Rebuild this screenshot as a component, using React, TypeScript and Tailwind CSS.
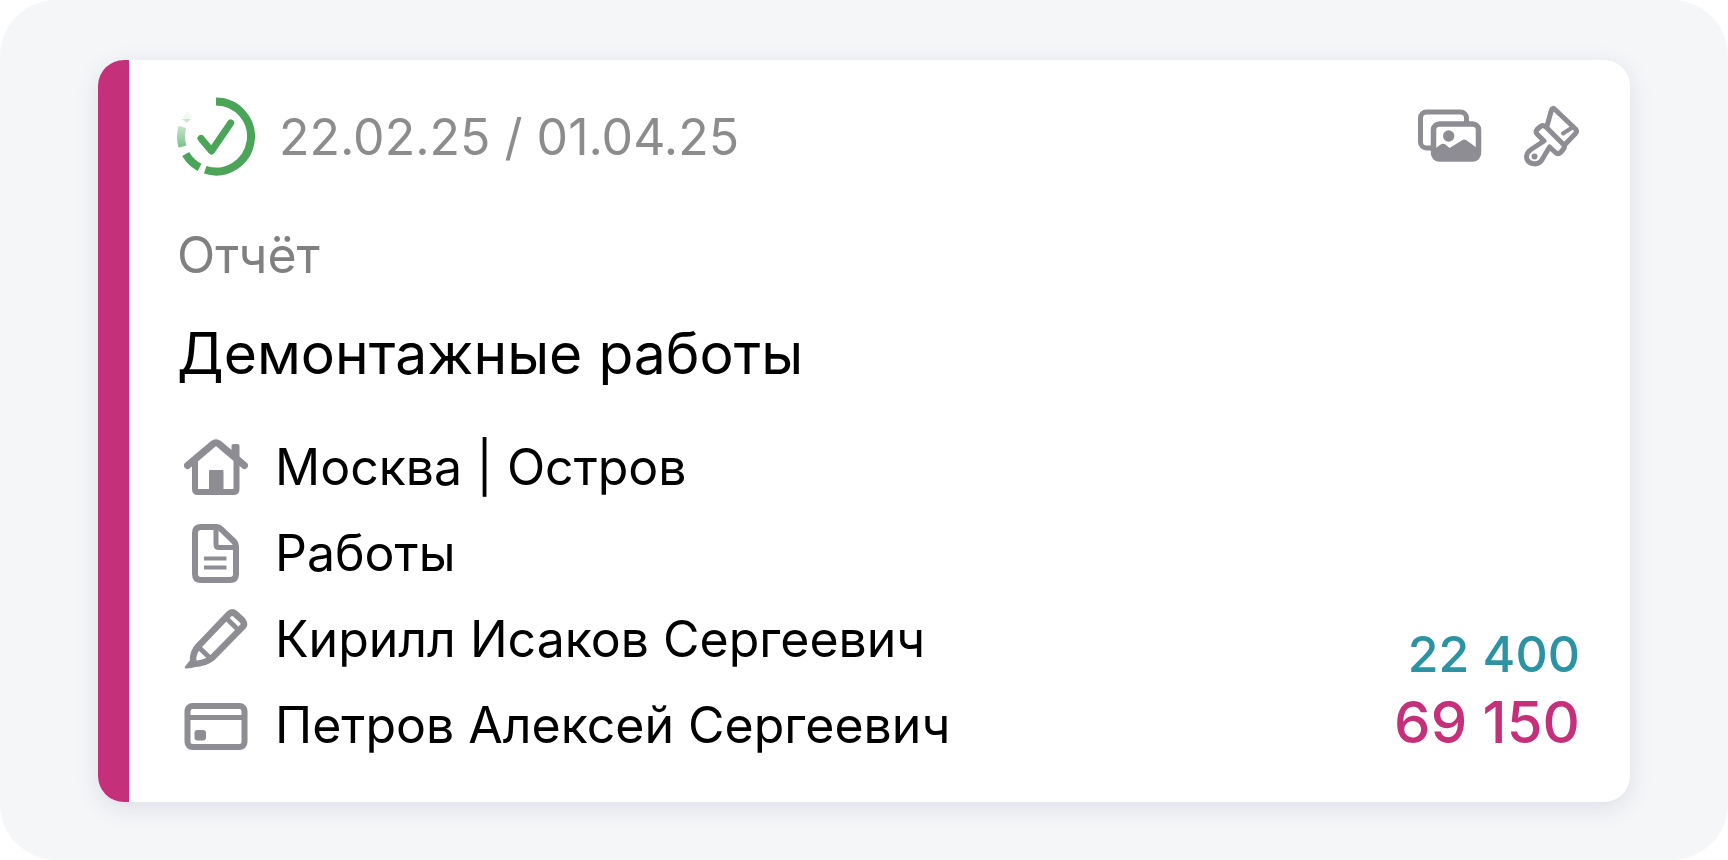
import React from 'react';

export default function App() {
  return (
    <main className="bg-white font-[Inter,sans-serif] text-black">
      <div className="min-h-screen rounded-[56px] bg-[#f5f6f8] px-[98px] pt-[60px] pb-[58px]">
        <article className="flex overflow-hidden rounded-[26px] bg-white shadow-[0_6px_24px_rgba(30,30,80,0.10)]">
          <div className="w-[31px] shrink-0 bg-[#c4307a]" />
          <div className="min-w-0 flex-1 pt-[37px] pr-[50px] pb-[34px] pl-12">
            <header className="flex h-20 items-center justify-between">
              <div className="flex items-center gap-6">
                <StatusIcon />
                <span className="text-[50px] leading-[60px] text-[#8c8c8c]">22.02.25 / 01.04.25</span>
              </div>
              <div className="flex items-center gap-10">
                <button type="button" aria-label="Фото">
                  <GalleryIcon />
                </button>
                <button type="button" aria-label="Оформление">
                  <BrushIcon />
                </button>
              </div>
            </header>

            <p className="mt-12 text-[50px] leading-[60px] text-[#808080]">Отчёт</p>
            <h1 className="mt-[34px] text-[57px] leading-[70px]">Демонтажные работы</h1>

            <div className="mt-[35px] flex items-end justify-between">
              <ul>
                <InfoRow icon={<HouseIcon />} text="Москва | Остров" />
                <InfoRow icon={<DocumentIcon />} text="Работы" />
                <InfoRow icon={<PencilIcon />} text="Кирилл Исаков Сергеевич" />
                <InfoRow icon={<CardIcon />} text="Петров Алексей Сергеевич" />
              </ul>
              <div className="pb-3 text-right font-medium">
                <p className="text-[50px] leading-[68px] text-[#2b93a3]">22 400</p>
                <p className="text-[58px] leading-[68px] text-[#c4307a]">69 150</p>
              </div>
            </div>
          </div>
        </article>
      </div>
    </main>
  );
}

interface InfoRowProps {
  icon: React.ReactNode;
  text: string;
}

function InfoRow({ icon, text }: InfoRowProps) {
  return (
    <li className="flex h-[86px] items-center gap-5">
      <span className="flex w-[78px] justify-center">{icon}</span>
      <span className="text-[50px] leading-[60px]">{text}</span>
    </li>
  );
}

function StatusIcon() {
  return (
    <svg className="h-20 w-[78px]" viewBox="0 0 78 80" fill="none" stroke="#4aa559" strokeWidth="8">
      <defs>
        <linearGradient id="fade" gradientUnits="userSpaceOnUse" x1="0" y1="52" x2="0" y2="16">
          <stop offset="0" stopColor="#4aa559" stopOpacity="0.75" />
          <stop offset="1" stopColor="#4aa559" stopOpacity="0.05" />
        </linearGradient>
      </defs>
      <path d="M39 4.5A35 35 0 1 1 28.2 72.8" />
      <path d="M22.6 70.4A35 35 0 0 1 8.7 57" />
      <path d="M5.5 49.7A35 35 0 0 1 5.4 29.9" stroke="url(#fade)" />
      <path d="M4.5 22H13.5L10 26Z" fill="#4aa559" fillOpacity="0.25" stroke="none" />
      <path d="M8 22L12.5 17" stroke="#4aa559" strokeOpacity="0.08" strokeWidth="6" />
      <path d="M24 41.5L34.5 54L53.7 26" strokeWidth="7" strokeLinecap="round" strokeLinejoin="round" />
    </svg>
  );
}

function GalleryIcon() {
  return (
    <svg className="h-16 w-16" viewBox="0 0 64 64" fill="none" stroke="#8e8d94" strokeWidth="5">
      <rect x="2.5" y="7" width="46" height="36" rx="6" />
      <rect x="15.5" y="19" width="45" height="35" rx="6" fill="#fff" strokeWidth="5.5" />
      <circle cx="30.7" cy="31" r="5.7" fill="#8e8d94" stroke="none" />
      <path d="M15 45L22 40Q25.3 37.5 28 40L31.5 43L43 36Q46.3 33 49.5 36L61 44.5V51Q61 56 56 56H20Q15 56 15 51Z" fill="#8e8d94" stroke="none" />
    </svg>
  );
}

function BrushIcon() {
  return (
    <svg className="h-16 w-[58px]" viewBox="0 0 58 64" fill="none" stroke="#8e8d94" strokeWidth="5" strokeLinecap="round" strokeLinejoin="round">
      <path d="M25 21L29.5 5Q30.5 2 33 4.5L53.5 24Q55.500 26 53.5 28.5L42.5 40" />
      <path d="M51 22L41 28.5" strokeWidth="4" />
      <path d="M24.5 22.5L41 39Q43.5 41.5 41.5 44L38.5 47.5Q36 50 33.5 47.5L27.5 42L19.5 55.5Q16 60 10.5 58.5Q4.5 57 4.5 51.5Q5 47 9 44.5L22 36L15.5 29.5Q13 27 15 24.5L18.5 21.5Q21.5 19.5 24.5 22.5Z" />
      <circle cx="12.5" cy="51.5" r="3" fill="#8e8d94" stroke="none" />
    </svg>
  );
}

function HouseIcon() {
  return (
    <svg className="h-16 w-16" viewBox="0 0 64 64" fill="none" stroke="#8e8d94" strokeWidth="6">
      <path d="M3.5 30.5L29 9Q32 6.500 35 9L60.5 30.5" strokeWidth="7" strokeLinecap="round" />
      <path d="M11 26V54Q11 57 14 57H49.500Q52.500 57 52.500 54V26" />
      <path d="M25 36Q25 35 26 35H38.5Q39.5 35 39.5 36V57H25Z" fill="#8e8d94" stroke="none" />
      <path d="M47.500 11Q47.5 9 49.5 9H53.5Q55.5 9 55.5 11V27L47.5 20Z" fill="#8e8d94" stroke="none" />
    </svg>
  );
}

function DocumentIcon() {
  return (
    <svg className="h-16 w-16" viewBox="0 0 64 64" fill="none" stroke="#8e8d94" strokeWidth="6" strokeLinejoin="round">
      <path d="M17 6H32.5Q35 6 37 8L50 20.5Q52 22.5 52 25V53Q52 59 46 59H17Q11 59 11 53V12Q11 6 17 6Z" />
      <path d="M32 6V23.5Q32 26.5 35 26.5H52" strokeWidth="5" />
      <path d="M20 37.5H42.5M20 46.5H42.5" strokeWidth="4" />
    </svg>
  );
}

function PencilIcon() {
  return (
    <svg className="h-16 w-16" viewBox="0 0 64 64" fill="none" stroke="#8e8d94" strokeWidth="6.5" strokeLinejoin="round">
      <path d="M13.5 40L45 7Q48 4 51.5 7L58.5 13.5Q61.5 17 58.5 20L28 51Q21 56.5 10 57Q7 49 13.5 40Z" />
      <path d="M14 39.5L27 52" strokeWidth="5" />
      <path d="M41.5 10.5L55 23.5" strokeWidth="5" />
      <path d="M7 52L1 59.5Q0 61.5 2.5 61.5Q8 61.5 12 59.5Z" fill="#8e8d94" stroke="none" />
    </svg>
  );
}

function CardIcon() {
  return (
    <svg className="h-16 w-16" viewBox="0 0 64 64" fill="none" stroke="#8e8d94" strokeWidth="6">
      <rect x="3.5" y="13" width="57" height="41" rx="5" />
      <path d="M3 24.5H61" strokeWidth="5" />
      <rect x="10.5" y="37" width="11.5" height="10.5" rx="3" fill="#8e8d94" stroke="none" />
    </svg>
  );
}
